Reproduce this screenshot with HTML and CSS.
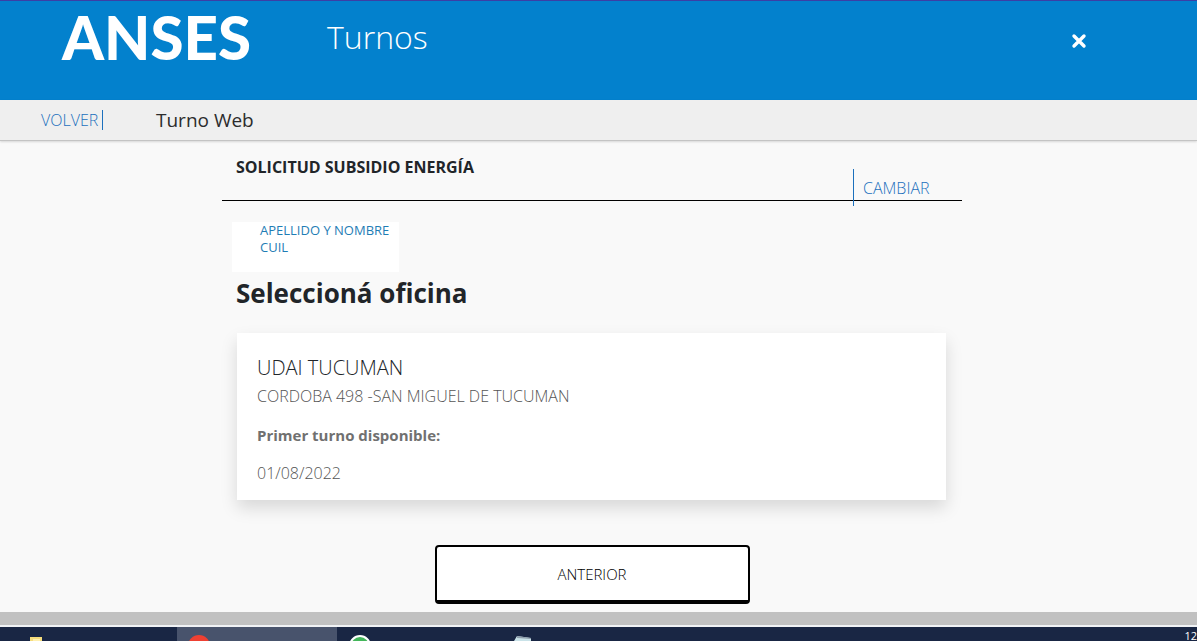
FILE: index.html
```html
<!DOCTYPE html>
<html lang="es">
<head>
<meta charset="utf-8">
<title>ANSES Turnos</title>
<link rel="stylesheet" href="styles.css">
</head>
<body>
<header class="header">
  <span class="logo">ANSES</span>
  <span class="app-name">Turnos</span>
  <button class="close" type="button" aria-label="Cerrar">
    <svg width="16" height="16" viewBox="0 0 16 16"><path d="M3 3 13 13M13 3 3 13" stroke="currentColor" stroke-width="3.4" stroke-linecap="round"/></svg>
  </button>
</header>
<nav class="subbar">
  <a class="back" href="#">VOLVER</a>
  <span class="section">Turno Web</span>
</nav>
<main class="main">
  <div class="service">
    <h2 class="service-title">SOLICITUD SUBSIDIO ENERGÍA</h2>
    <a class="change" href="#">CAMBIAR</a>
  </div>
  <div class="person">
    <div>APELLIDO Y NOMBRE</div>
    <div>CUIL</div>
  </div>
  <h1 class="title">Seleccioná oficina</h1>
  <article class="card">
    <h3 class="office">UDAI TUCUMAN</h3>
    <p class="address">CORDOBA 498 -SAN MIGUEL DE TUCUMAN</p>
    <p class="first">Primer turno disponible:</p>
    <p class="date">01/08/2022</p>
  </article>
  <button class="previous" type="button">ANTERIOR</button>
</main>
<div class="scrollbar"></div>
<footer class="taskbar">
  <svg class="folder" width="14" height="4" viewBox="0 0 14 4"><path d="M0 0H12V4H0Z" fill="#f5dc7c"/><path d="M3 2H10V4H3Z" fill="#fff0b0"/></svg>
  <div class="task-active">
    <svg width="24" height="6" viewBox="0 0 24 6"><circle cx="12" cy="11" r="11" fill="#ee4032"/></svg>
  </div>
  <svg class="chat" width="24" height="6" viewBox="0 0 24 6"><circle cx="12" cy="11" r="10" fill="#43b65a" stroke="#fff" stroke-width="2"/></svg>
  <svg class="note" width="18" height="5" viewBox="0 0 18 5"><path d="M3 0 17 2V5H0Z" fill="#c9e2e8"/><path d="M3 0 17 2V3L3 2Z" fill="#8d9caa"/></svg>
  <span class="clock">12</span>
</footer>
</body>
</html>
```
FILE: styles.css
```css
* { box-sizing: border-box; }
body {
  margin: 0;
  min-height: 100vh;
  display: flex;
  flex-direction: column;
  background: #f9f9f9;
  color: #212529;
  font-family: "Open Sans", "Noto Sans", sans-serif;
  font-size: 16px;
}
h1, h2, h3, p { margin: 0; }
a { text-decoration: none; color: #1c70bd; }

.header {
  flex: none;
  display: flex;
  align-items: flex-start;
  height: 100px;
  padding: 6px 108px 0 62px;
  border-top: 1px solid #3b3fa5;
  background: #0381cd;
  color: #fff;
}
.logo {
  width: 265px;
  font-family: Lato, sans-serif;
  font-size: 60px;
  font-weight: 900;
  line-height: 60px;
}
.app-name {
  font-size: 32px;
  font-weight: 300;
  line-height: 60px;
}
.close {
  margin: 24px 0 0 auto;
  padding: 2px;
  border: 0;
  background: none;
  color: #fff;
  line-height: 0;
}

.subbar {
  flex: none;
  display: flex;
  align-items: center;
  height: 41px;
  padding-left: 41px;
  background: #efefef;
  border-bottom: 1px solid #c4c4c4;
  box-shadow: 0 1px 2px #0002;
}
.back {
  width: 62px;
  border-right: 1px solid #1c70bd;
  font-weight: 300;
  line-height: 20px;
}
.section {
  margin-left: 53px;
  color: #2c2c2c;
  font-size: 19px;
  font-weight: 500;
}

.main {
  flex: 1 0 auto;
  display: flex;
  flex-direction: column;
  width: 100%;
  max-width: 753px;
  margin: 0 auto;
  padding: 0 13px 8px 0;
}
.service {
  display: flex;
  justify-content: space-between;
  height: 60px;
  padding: 16px 0 0 14px;
  border-bottom: 1px solid #000;
}
.service-title {
  font-size: 16px;
  font-weight: 700;
  line-height: 20px;
}
.change {
  height: 37px;
  width: 109px;
  margin-top: 12px;
  padding-left: 9px;
  border-left: 1px solid #1c70bd;
  font-weight: 300;
  line-height: 38px;
}
.person {
  align-self: flex-start;
  width: 167px;
  height: 50px;
  margin: 21px 0 0 10px;
  padding-left: 28px;
  background: #fff;
  color: #1f7db5;
  font-size: 13px;
  line-height: 17px;
  white-space: nowrap;
}
.title {
  margin: 3px 0 0 14px;
  font-size: 26px;
  font-weight: 700;
  line-height: 36px;
}
.card {
  margin: 22px 16px 0 15px;
  padding: 22px 20px 17px;
  background: #fff;
  box-shadow: 0 8px 16px #0002;
  color: #707070;
}
.office {
  color: #212529;
  font-size: 20px;
  font-weight: 300;
  line-height: 26px;
}
.address, .date { color: #555; font-weight: 300; }
.address { line-height: 30px; }
.first { margin-top: 14px; font-size: 15px; font-weight: 700; line-height: 20px; }
.date { margin-top: 18px; line-height: 20px; }
.previous {
  align-self: center;
  width: 315px;
  height: 59px;
  margin-top: 45px;
  border: 2px solid #000;
  border-bottom-width: 4px;
  border-radius: 4px;
  background: #fff;
  color: #000;
  font: 300 15px "Open Sans", "Noto Sans", sans-serif;
}

.scrollbar {
  flex: none;
  height: 15px;
  background: #c1c1c1;
  border-bottom: 2px solid #f0f2f5;
}
.taskbar {
  flex: none;
  display: flex;
  align-items: flex-end;
  height: 14px;
  overflow: hidden;
  background: #192644;
}
.folder { margin-left: 30px; }
.task-active {
  display: flex;
  align-items: flex-end;
  width: 160px;
  height: 14px;
  margin-left: 133px;
  padding-left: 10px;
  background: #48536c;
}
.chat { margin-left: 11px; }
.note { margin-left: 142px; }
.clock {
  margin-left: auto;
  color: #fff;
  font-size: 11px;
  line-height: 10px;
}
```
